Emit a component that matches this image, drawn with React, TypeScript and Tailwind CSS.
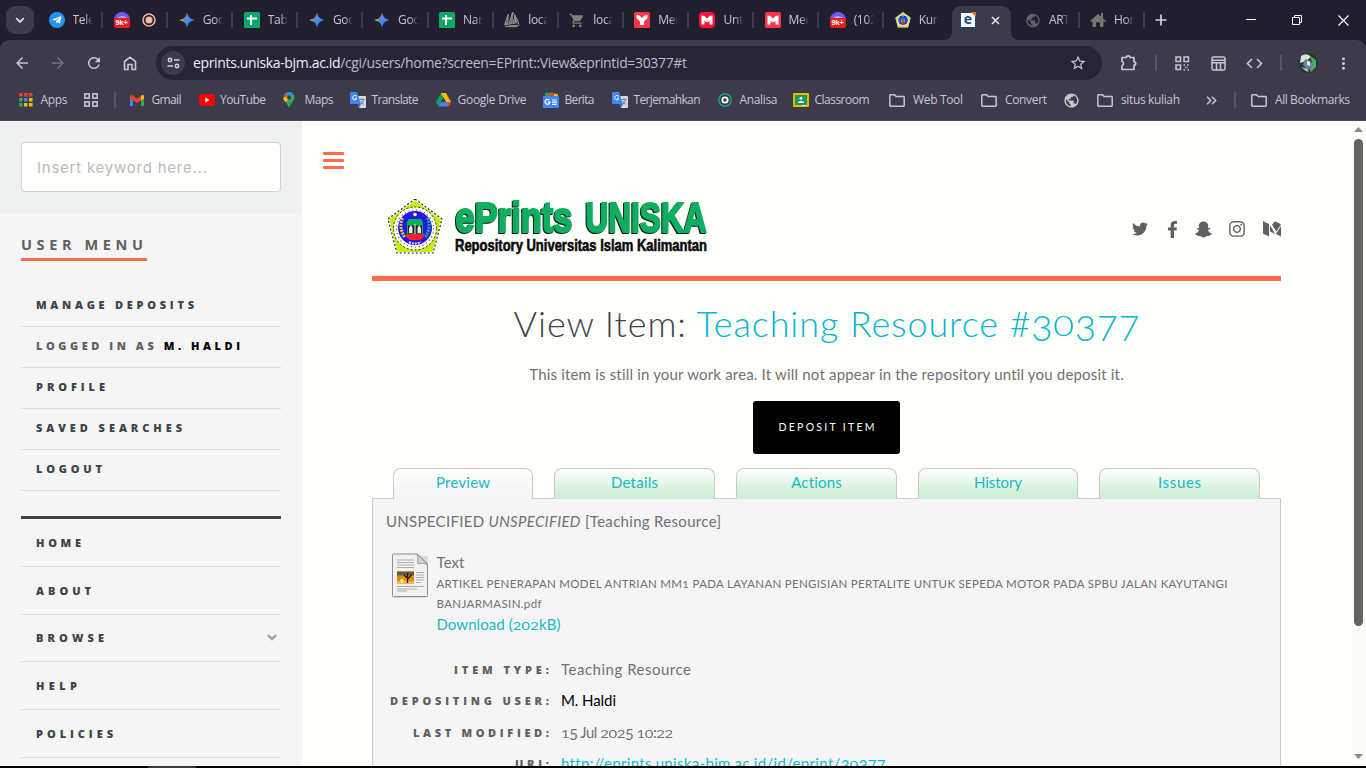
import React, { useLayoutEffect, useRef } from "react";
import {
  FaTwitter, FaFacebookF, FaSnapchatGhost, FaInstagram, FaTelegramPlane,
} from "react-icons/fa";
import { MdShoppingCart, MdPublic, MdOutlineStarBorder, MdMoreVert, MdArrowBack, MdArrowForward, MdRefresh } from "react-icons/md";

/* Text set to a given advance width by adjusting its tracking. */
function Fit({ w, className = "", children }: { w: number; className?: string; children: React.ReactNode }) {
  const ref = useRef<HTMLSpanElement>(null);
  useLayoutEffect(() => {
    const el = ref.current;
    if (!el) return;
    el.style.letterSpacing = "0px";
    const n = Math.max(1, (el.textContent || "").length - 1);
    const ls = (w - el.getBoundingClientRect().width) / n;
    el.style.letterSpacing = ls + "px";
    el.style.marginRight = -ls + "px";
  }, [w]);
  return <span ref={ref} className={"inline-block whitespace-pre " + className}>{children}</span>;
}

/* Old-style numerals: 0-2 at x-height, 3/4/5/7/9 hanging below the baseline. */
function Old({ children }: { children: string }) {
  return (
    <>
      {children.split("").map((c, i) =>
        "012".includes(c) ? (
          <span key={i} className="inline-block origin-[50%_78%] scale-y-[0.78] leading-none">{c}</span>
        ) : "34579".includes(c) ? (
          <span key={i} className="inline-block translate-y-[0.12em] leading-none">{c}</span>
        ) : (
          c
        )
      )}
    </>
  );
}

const Gemini = () => (
  <svg width="16" height="16" viewBox="0 0 16 16">
    <defs>
      <linearGradient id="gm" x1="0.2" y1="0" x2="0.8" y2="1">
        <stop offset="0.15" stopColor="#f04a3e" /><stop offset="0.45" stopColor="#4f8cf6" /><stop offset="0.7" stopColor="#3186ff" /><stop offset="1" stopColor="#2f80f5" />
      </linearGradient>
      <linearGradient id="gm2" x1="0" y1="0.4" x2="0.5" y2="0.8">
        <stop offset="0" stopColor="#fbc02d" /><stop offset="0.5" stopColor="#2ea65a" /><stop offset="1" stopColor="#2ea65a" stopOpacity="0" />
      </linearGradient>
    </defs>
    <path d="M8 .3C8.7 4.6 11 7.2 15.7 8 11 8.8 8.7 11.4 8 15.7 7.3 11.4 5 8.8.3 8 5 7.2 7.3 4.6 8 .3z" fill="url(#gm)" />
    <path d="M.3 8C4 7.7 6 8 8 8v7.7C7.300 11.4 5 8.800.3 8z" fill="url(#gm2)" />
  </svg>
);
const Sheet = () => (
  <svg width="16" height="16" viewBox="0 0 16 16"><rect width="16" height="16" rx="1.500" fill="#0aa866" /><path d="M3 6.500h10M7 3v10" stroke="#fff" strokeWidth="2" /></svg>
);
const Badge = () => (
  <div className="relative h-4 w-4">
    <svg width="16" height="16" viewBox="0 0 16 16"><circle cx="8" cy="8" r="8" fill="#6a5cf0" /><path d="M3 6q5-4 10 0v3H3z" fill="#a9a2ff" /></svg>
    <span className="absolute top-[6px] left-0 flex h-[10px] w-4 items-center justify-center rounded-[2px] bg-[#ee1c1c] font-['Liberation_Sans'] text-[7.500px] font-bold leading-none tracking-[-0.2px] text-white">9k+</span>
  </div>
);
const Rec = () => (
  <svg width="14" height="14" viewBox="0 0 14 14"><circle cx="7" cy="7" r="6" fill="none" stroke="#f5b8a2" strokeWidth="1.500" /><circle cx="7" cy="7" r="3.500" fill="#f5b8a2" /></svg>
);
const Ships = () => (
  <svg width="17" height="16" viewBox="0 0 17 16" fill="none" stroke="#a09d98" strokeWidth="1">
    <path d="M4.500 2L1 12h3zM9 0L5.500 12h3zM12 3l-2.500 9 3-1z" fill="#66635f" /><path d="M0 13h5l2 1h9M1 15h13M10 0l4 12M13 5l3 8" />
  </svg>
);
const Mend = ({ kind, round }: { kind: "y" | "m"; round?: boolean }) => (
  <svg width="16" height="16" viewBox="0 0 16 16"><rect width="16" height="16" rx={round ? 4 : 1.5} fill={round ? "#fa1238" : "#fa3745"} />
    {kind === "y" ? <path d="M2.500 3l3 .5L8 6l2.500-2.500 3-.5v3L10 9.500V13H6V9.500L2.500 6z" fill="#fff" /> : <path d="M2.500 3.500l3 .5L8 6.500 10.500 4l3-.5v9h-3V9L8 10.500 5.500 9v3.500h-3zM4.500 7v2M11.500 7v2" fill="#fff" />}
  </svg>
);
const Crest = ({ s }: { s: number }) => (
  <svg width={s} height={s} viewBox="0 0 56 56">
    <path d="M28 0L55 20 46 54H10L1 20z" fill="#fff" stroke="#222" strokeWidth="1.200" strokeDasharray="2 2" strokeLinejoin="round" />
    <path d="M28 4L51.500 21 44 51H12L4.500 21z" fill="#c8ee08" stroke="#c8ee08" strokeWidth="4" strokeLinejoin="round" />
    <circle cx="28" cy="29.500" r="21.500" fill="#fffffa" stroke="#222" strokeWidth="1" strokeDasharray="2 2" />
    <circle cx="28" cy="29.500" r="18.500" fill="none" stroke="#555" strokeWidth="1.200" strokeDasharray="1 3" />
    <circle cx="28" cy="29" r="17" fill="#2418e8" />
    <path d="M15.500 19q-4 9 2 19" fill="none" stroke="#d9d23a" strokeWidth="3" strokeDasharray="2 1" />
    <path d="M40.500 19q4 9-2 19" fill="none" stroke="#2aa890" strokeWidth="3" strokeDasharray="2 1" />
    <circle cx="28" cy="15.500" r="1.800" fill="#fff" /><path d="M22 20h12l2 3v12H20V23z" fill="#0cae5b" />
    <path d="M20 35h16l2 2-5 4h-10l-5-4z" fill="#ef2525" />
    <path d="M21 34.500v-8h14v8z" fill="#222" /><path d="M22 34v-5l2-3 1.500 3v5zM30.500 34v-5l1.500-3 2 3v5z" fill="#e9e9e9" /><path d="M27.500 25h1v10h-1z" fill="#e9e9e9" />
    <path d="M22 43q6 3 12 0" stroke="#e5e5ff" strokeWidth="2" fill="none" strokeDasharray="2 1" />
  </svg>
);
const EP = () => (
  <div className="relative flex h-4 w-4 items-center justify-center border border-[#0f4d80] bg-white font-['Open_Sans'] text-[14px] font-bold leading-none text-[#0f4d80]">
    <span className="-mt-[3px]">e</span>
    <svg className="absolute -top-px -right-px" width="5" height="5"><path d="M0 0h5v5z" fill="#f26b1d" /></svg>
  </div>
);
const House = () => (
  <svg width="16" height="16" viewBox="0 0 16 16" fill="#77756c"><path d="M8 2L0 9l1 1 1.500-1v6H6v-4q2-2 4 0v4h3.500V9l1.500 1 1-1-3-2.600V1h-2v3.600z" /></svg>
);

const tabs: { icon: React.ReactNode; t?: string; active?: boolean; nosep?: boolean }[] = [
  { icon: <span className="flex h-4 w-4 items-center justify-center rounded-full bg-[#2095f2]"><FaTelegramPlane size={10} color="#fff" /></span>, t: "Tele" },
  { icon: <Badge /> },
  { icon: <Gemini />, t: "Goo" },
  { icon: <Sheet />, t: "Tab" },
  { icon: <Gemini />, t: "Goo" },
  { icon: <Gemini />, t: "Goo" },
  { icon: <Sheet />, t: "Nar" },
  { icon: <Ships />, t: "loca" },
  { icon: <MdShoppingCart size={17} color="#807e7c" />, t: "loca" },
  { icon: <Mend kind="y" />, t: "Mer" },
  { icon: <Mend kind="m" round />, t: "Unt" },
  { icon: <Mend kind="m" />, t: "Mer" },
  { icon: <Badge />, t: "(102" },
  { icon: <Crest s={16} />, t: "Kur", nosep: true },
  { icon: <EP />, active: true },
  { icon: <MdPublic size={17} color="#5d6468" />, t: "ART" },
  { icon: <House />, t: "Hor" },
];

const Folder = () => (
  <svg width="16" height="13" viewBox="0 0 16 13" fill="none" stroke="#c9c6d3" strokeWidth="1.500"><path d="M.8 2.300V1.500q0-.7.7-.7h4l1.700 1.700h7.300q.7 0 .7.700v8.300q0 .7-.7.700h-13q-.7 0-.7-.7z" /></svg>
);
const AppsIcon = () => (
  <svg width="14" height="14" viewBox="0 0 14 14">
    {["#ea4335", "#ea4335", "#ea4335", "#34a853", "#4285f4", "#fbbc04", "#34a853", "#fbbc04", "#fbbc04"].map((c, i) => (
      <rect key={i} x={(i % 3) * 5} y={Math.floor(i / 3) * 5} width="3.500" height="3.500" fill={c} />
    ))}
  </svg>
);
const Grid4 = () => (
  <svg width="14" height="14" viewBox="0 0 14 14" fill="none" stroke="#c0bdca" strokeWidth="1.700"><path d="M.8.8h4.400v4.400H.8zM8.800.8h4.400v4.400H8.800zM.8 8.800h4.400v4.400H.8zM8.800 8.800h4.400v4.400H8.800z" /></svg>
);
const Gmail = () => (
  <svg width="14" height="11" viewBox="0 0 14 11"><path d="M0 1.500v9.500h3V5z" fill="#4285f4" /><path d="M14 1.500v9.500h-3V5z" fill="#34a853" /><path d="M0 1.500Q.5-.8 3 .7l4 3 4-3q2.500-1.500 3 .8v2L7 8 0 3.500z" fill="#ea4335" /><path d="M11 .7q2.500-1.500 3 .8v2l-3 2z" fill="#fbbc04" /></svg>
);
const YT = () => <svg width="16" height="12" viewBox="0 0 16 12"><rect width="16" height="12" rx="3" fill="#f00" /><path d="M6.300 3.500v5l4.200-2.500z" fill="#fff" /></svg>;
const Maps = () => (
  <svg width="12" height="16" viewBox="0 0 12 16"><path d="M6 0a5.600 5.600 0 015.600 5.600C11.600 9 8 10.500 6 16 4 10.500.4 9 .4 5.600A5.600 5.600 0 016 0z" fill="#34a853" /><path d="M6 5.600L10 1.700Q8.500 0 6 0 3.500 0 1.700 2z" fill="#4285f4" /><path d="M1.700 2Q.2 3.500.4 6.500L4 5.600 5 4z" fill="#ea4335" /><path d="M.4 6Q.8 8.600 2.500 10.300L8 4.500 5 4z" fill="#fbbc04" /><circle cx="6" cy="5.500" r="2" fill="#3c3a4b" /></svg>
);
const Trans = () => (
  <svg width="16" height="16" viewBox="0 0 16 16"><path d="M6 4h9q1 0 1 1v10q0 1-1 1H9z" fill="#d5d9df" /><path d="M1 0h6l4 12H1q-1 0-1-1V1q0-1 1-1z" fill="#4285f4" /><path d="M7.500 12H11l-2 4z" fill="#3367d6" /><path d="M6.500 4.200A2.200 2.200 0 106.600 7V6.200H5" stroke="#fff" strokeWidth="1" fill="none" /><path d="M9.500 7.500h5M12 6v1.500M13.500 8q-.5 3-3 4.500M11 9q1 2.500 3 3.500" stroke="#6f7a86" strokeWidth=".9" fill="none" /></svg>
);
const Drive = () => <svg width="15" height="14" viewBox="0 0 15 14"><path d="M5 0h5L5 8.800 2.500 13.300 0 9z" fill="#12a05c" /><path d="M5 0h5l5 9h-5z" fill="#fbbc04" /><path d="M5 9h10l-2.500 4.500h-10z" fill="#4285f4" /><path d="M10 9h5l-2.500 4.500z" fill="#ea4335" /><path d="M5.200 8.900L7.500 5 9.800 8.900z" fill="#3c3a4b" /></svg>;
const News = () => <svg width="16" height="16" viewBox="0 0 16 16"><path d="M2 1l8-1v6H2z" fill="#14a25d" /><path d="M6 1l8 .5V6H6z" fill="#ea4335" /><path d="M11 1.500l4 1V6h-4z" fill="#fbbc04" /><rect y="4" width="16" height="12" rx="1" fill="#4285f4" /><path d="M6.500 8.200A2.500 2.500 0 106.800 11v-.8H4.800M9 8h4.500M9 10.200h5M9 12.400h4.500" stroke="#fff" strokeWidth="1.200" fill="none" /></svg>;
const Analisa = () => <svg width="14" height="14" viewBox="0 0 14 14"><circle cx="7" cy="7" r="6.200" fill="none" stroke="#12a678" strokeWidth="1.500" /><circle cx="7" cy="7" r="2.700" fill="none" stroke="#fff" strokeWidth="1.800" /></svg>;
const Classroom = () => <svg width="16" height="14" viewBox="0 0 16 14"><rect width="16" height="14" rx="1" fill="#f4b400" /><rect x="2" y="2" width="12" height="10" fill="#149a5b" /><circle cx="8" cy="5.300" r="1.500" fill="#fff" /><path d="M4.500 10q.5-2 3.500-2t3.500 2z" fill="#fff" /><path d="M9 12h4v1H9z" fill="#eee" /></svg>;

const bookmarks: { c: string; i: React.ReactNode; t?: string; w?: number; g?: string }[] = [
  { c: "w-[65px]", i: <AppsIcon />, t: "Apps", w: 27 },
  { c: "w-[30px]", i: <Grid4 /> },
  { c: "w-[16px]", i: <span className="h-4 w-0.5 bg-[#56536a]" /> },
  { c: "w-[68.500px]", i: <Gmail />, t: "Gmail", w: 30 },
  { c: "w-[84.500px]", i: <YT />, t: "YouTube", w: 46 },
  { c: "w-[67px]", i: <Maps />, t: "Maps", w: 29 },
  { c: "w-[86px]", i: <Trans />, t: "Translate", w: 47 },
  { c: "w-[107px]", i: <Drive />, t: "Google Drive", w: 69 },
  { c: "w-[69px]", i: <News />, t: "Berita", w: 30 },
  { c: "w-[106px]", i: <Trans />, t: "Terjemahkan", w: 67 },
  { c: "w-[75px]", i: <Analisa />, t: "Analisa", w: 38 },
  { c: "w-[96px]", i: <Classroom />, t: "Classroom", w: 55 },
  { c: "w-[92px]", i: <Folder />, t: "Web Tool", w: 50, g: "f" },
  { c: "w-[82px]", i: <Folder />, t: "Convert", w: 42, g: "f" },
  { c: "w-[34px]", i: <MdPublic size={17} color="#c6c9cc" /> },
  { c: "w-[109px]", i: <Folder />, t: "situs kuliah", w: 59, g: "f" },
  { c: "w-[28px]", i: <svg width="11" height="9" fill="none" stroke="#c9c6d3" strokeWidth="1.500"><path d="M1 .8l3.700 3.700L1 8.200M6 .8l3.700 3.700L6 8.200" /></svg> },
  { c: "w-[17px]", i: <span className="h-4 w-0.5 bg-[#56536a]" /> },
  { c: "w-[104px]", i: <Folder />, t: "All Bookmarks", w: 75, g: "f" },
];

function Chrome() {
  return (
    <header className="flex h-[121px] flex-none flex-col border-b border-[#4b4859] bg-[#211e2f] font-['Open_Sans',sans-serif] text-[12px] text-[#c9c6d3]">
      <div className="flex h-10 flex-none items-center">
        <div className="ml-1.5 flex h-7 w-7 flex-none items-center justify-center rounded-[9px] bg-[#3c3a4b]">
          <svg width="10" height="7" fill="none" stroke="#dedbe8" strokeWidth="1.800"><path d="M1.200 1.200L5 5l3.800-3.800" /></svg>
        </div>
        <div className="ml-1 flex h-10 items-center">
          {tabs.map((t, i) =>
            t.active ? (
              <div key={i} className="relative flex h-[34px] w-[65.1px] flex-none items-center self-end">
                <svg className="absolute top-0 -left-[6px]" width="76" height="34"><path d="M0 34q9 0 9-9V10Q9 0 19 0h39q10 0 10 10v15q0 9 8 9z" fill="#3c3a4b" /></svg>
                <span className="relative -mt-1.5 ml-[10.500px]"><EP /></span>
                <svg className="relative -mt-1.5 ml-[15px]" width="9" height="9" stroke="#e2dfea" strokeWidth="1.600"><path d="M1 1l7 7M8 1L1 8" /></svg>
              </div>
            ) : (
              <div key={i} className="flex h-10 w-[65.1px] flex-none items-center pl-[10.500px]">
                <span className="flex w-4 flex-none justify-center">{t.icon}</span>
                {t.t ? (
                  <span className="ml-2 w-[20px] flex-none overflow-hidden whitespace-nowrap tracking-[-0.3px] [mask-image:linear-gradient(to_right,#000_60%,transparent)]">{t.t}</span>
                ) : (
                  <span className="ml-3 w-[15px] flex-none"><Rec /></span>
                )}
                {!t.nosep && <span className="mr-0 ml-auto h-4 w-0.5 flex-none bg-[#3f3c4e]" />}
              </div>
            )
          )}
        </div>
        <svg className="ml-[10px]" width="12" height="12" stroke="#d5d2df" strokeWidth="1.700"><path d="M6 .5v11M.5 6h11" /></svg>
        <div className="mr-[17px] ml-auto flex items-center text-white">
          <svg className="mr-[36px]" width="10" height="10" stroke="#fff"><path d="M0 4.500h10" /></svg>
          <svg className="mr-[36px]" width="10" height="10" stroke="#fff" fill="none"><path d="M.5 2.500h7v7h-7zM2.500 2.500v-2h7v7h-2" /></svg>
          <svg width="11" height="11" stroke="#fff" strokeWidth="1.200"><path d="M.5.5l10 10M10.500.5l-10 10" /></svg>
        </div>
      </div>
      <div className="flex h-20 flex-none flex-col rounded-t-[9px] bg-[#3c3a4b]">
        <div className="flex h-[46px] items-center pl-[13px] text-[#c9c6d3]">
          <MdArrowBack size={18} /><MdArrowForward size={18} className="ml-[18px] text-[#726f80]" />
          <MdRefresh size={18} className="ml-[18px]" />
          <svg className="ml-[20px]" width="14" height="15" viewBox="0 0 14 15" fill="none" stroke="currentColor" strokeWidth="1.600"><path d="M1.500 13.500V5.500L7 1.200l5.500 4.300v8H9v-5H5v5z" /></svg>
          <div className="ml-[19px] flex h-[34px] w-[946px] items-center rounded-full bg-[#262435] pl-[5px]">
            <span className="flex h-6 w-6 items-center justify-center rounded-full bg-[#3c3a4b]">
              <svg width="13" height="12" viewBox="0 0 13 12" fill="none" stroke="#d5d2df" strokeWidth="1.500"><circle cx="3" cy="3" r="1.700" /><path d="M7 3h5.500M.5 9H6" /><circle cx="10" cy="9" r="1.700" /></svg>
            </span>
            <Fit w={494} className="ml-2 text-[14px] leading-none text-[#bebbc8]"><span className="text-[#f0eef6]">eprints.uniska-bjm.ac.id</span>/cgi/users/home?screen=EPrint::View&amp;eprintid=30377#t</Fit>
            <MdOutlineStarBorder size={18} className="mr-[15px] ml-auto" />
          </div>
          <svg className="ml-[18px]" width="18" height="18" viewBox="0 0 18 18" fill="none" stroke="currentColor" strokeWidth="1.700"><path d="M2 3.500h4.500a1.700 1.700 0 013.400 0H14v4.300a1.700 1.700 0 010 3.400v4.300H2v-3.800a2.200 2.200 0 000-4.200z" strokeLinejoin="round" /></svg>
          <span className="ml-[17px] h-4 w-0.5 bg-[#56536a]" />
          <svg className="ml-[18px]" width="15" height="15" fill="none" stroke="currentColor" strokeWidth="1.500"><path d="M1 1h4.500v4.500H1zM9 1h4.500v4.500H9zM1 9h4.500v4.500H1z" /><path d="M8.500 9h2M12 9h2.500M10 11.500h3M8.500 14h2M12.500 14h2" strokeDasharray="1.500 1" /></svg>
          <svg className="ml-[21px]" width="15" height="15" fill="none" stroke="currentColor" strokeWidth="1.500"><rect x="1" y="1" width="13" height="13" rx="1.500" /><path d="M1 4.200h13M1 6.700h13M5.500 6.500V14M9.500 6.500V14" /></svg>
          <svg className="ml-[20px]" width="17" height="11" fill="none" stroke="currentColor" strokeWidth="1.600"><path d="M6 1L1.500 5.500 6 10M11 1l4.500 4.500L11 10" /></svg>
          <span className="ml-[17px] h-4 w-0.5 bg-[#56536a]" />
          <svg className="ml-[16px]" width="20" height="20" viewBox="0 0 20 20"><circle cx="10" cy="10" r="10" fill="#27382f" /><path d="M3 3q6-4 10 1l-5 4-6 2z" fill="#dde4da" /><path d="M12 3l6 4v7l-5 5-3-5 4-5z" fill="#58a466" /><path d="M7 6l6 2 1 7-5 2-4-5z" fill="#67809e" /><path d="M9 8l3 1v4l-3-1z" fill="#e4e8ef" /><path d="M3 14l5 4 3 1-2-3z" fill="#bdcdb8" /></svg>
          <MdMoreVert size={19} className="ml-[16px]" />
        </div>
        <div className="flex h-[28px] items-center pl-[19px]">
          {bookmarks.map((b, i) => (
            <div key={i} className={"flex flex-none items-center " + b.c}>
              <span className={b.g ? "flex w-6 flex-none" : b.t ? "flex w-[21.500px] flex-none" : "flex"}>{b.i}</span>
              {b.t && <Fit w={b.w || 0} className="leading-none">{b.t}</Fit>}
            </div>
          ))}
        </div>
      </div>
    </header>
  );
}

const cap = "font-['Open_Sans'] font-extrabold text-[11px] leading-none";

function Sidebar() {
  const user: [React.ReactNode, number][] = [
    ["MANAGE DEPOSITS", 158],
    [<><span className="text-[#5f6060]">LOGGED IN AS </span><span className="text-black">M. HALDI</span></>, 204],
    ["PROFILE", 69],
    ["SAVED SEARCHES", 146],
    ["LOGOUT", 66],
  ];
  const nav: [string, number, string][] = [
    ["HOME", 45, "h-[48px]"], ["ABOUT", 55, "h-[48px]"], ["BROWSE", 68, "h-[47px]"], ["HELP", 41, "h-[48px]"], ["POLICIES", 77, "h-[48px]"],
  ];
  return (
    <aside className="flex w-[302px] flex-none flex-col overflow-hidden bg-[#f5f5f6] text-[#3d4449]">
      <div className="h-[92px] flex-none bg-[#eff1f1] px-[21px] pt-[21px]">
        <div className="flex h-[50px] items-center rounded border border-[#cfd1d0] bg-[#fffffc] pl-[15px]">
          <Fit w={170} className="font-['Inter'] text-[15px] leading-none text-[#b9bbba]">Insert keyword here...</Fit>
        </div>
      </div>
      <div className="flex flex-col items-start px-[21px] pt-[25px]">
        <div className="flex h-[23px] w-[126px] border-b-[3px] border-[#ff6a4d]">
          <Fit w={122} className="font-['Open_Sans'] text-[14.500px] font-bold leading-none text-[#5f6060]">USER MENU</Fit>
        </div>
        <ul className="mt-[25px] w-[260px]">
          {user.map(([t, w], i) => (
            <li key={i} className="flex h-[41px] items-center border-b border-[#d8dede] pb-[3px] pl-[15px]">
              <Fit w={w} className={cap}>{t}</Fit>
            </li>
          ))}
        </ul>
        <ul className="mt-[25px] w-[260px] border-t-[3px] border-[#3d4449]">
          {nav.map(([t, w, h], i) => (
            <li key={i} className={"flex items-center justify-between border-b border-[#d8dede] pr-1 pb-px pl-[15px] " + h}>
              <Fit w={w} className={cap}>{t}</Fit>
              {t === "BROWSE" && <svg width="10" height="7" fill="none" stroke="#9b9e9f" strokeWidth="2.400"><path d="M.9 1L5 5l4.100-4" /></svg>}
            </li>
          ))}
        </ul>
      </div>
    </aside>
  );
}

const Logo = () => (
  <svg width="324" height="60" viewBox="0 0 324 60">
    <g transform="translate(0 2)"><Crest s={56} /></g>
    <g fontFamily="Liberation Sans Narrow, Liberation Sans, sans-serif" fontWeight="700">
      <g className="drop-shadow-[-1px_1px_0_#0a1a10]" fill="#0fae60" stroke="#0fae60" strokeWidth="2.200">
        <text x="68.500" y="35" fontSize="43" textLength="117" lengthAdjust="spacingAndGlyphs">ePrints</text>
        <text x="198.500" y="35" fontSize="43" textLength="121" lengthAdjust="spacingAndGlyphs">UNISKA</text>
      </g>
      <text x="68" y="53.500" fontSize="16" textLength="252" lengthAdjust="spacingAndGlyphs" fill="#0a0a0a" stroke="#0a0a0a" strokeWidth=".6">Repository Universitas Islam Kalimantan</text>
    </g>
  </svg>
);

const DocIcon = () => (
  <svg width="38" height="46" viewBox="0 0 38 46">
    <rect x="1" y="3" width="36" height="42" rx="2" fill="#c9c9c9" opacity=".6" />
    <path d="M2.500 1h24L36.500 11v31.500q0 1-1 1h-33q-1 0-1-1V2q0-1 1-1z" fill="#f1f2f0" stroke="#8c8e8c" />
    <path d="M26 1q1.500 4 .5 9.500 5-1 10 1z" fill="#d2d3d1" stroke="#8c8e8c" strokeWidth=".8" />
    <path d="M6 7h17M6 9.500h17M6 12h17M6 14.500h17M25 19.500h8M25 22h8M25 24.500h8M25 27h8M25 29.500h5M6 33.500h27M6 36h20M6 38h10" stroke="#adafad" />
    <rect x="6" y="18.500" width="17" height="12" fill="#d98f1d" /><rect x="6" y="18.500" width="17" height="4" fill="#6b5a3c" />
    <path d="M6 28h17v2.500H6z" fill="#eeb73b" /><circle cx="11" cy="28" r="2" fill="#ffe680" />
    <path d="M16.500 30v-5l-3.500-3M16.500 26l4-4M16.500 24v-4" stroke="#1e1606" strokeWidth="1.200" fill="none" />
  </svg>
);

function Main() {
  const tabList: [string, number, string][] = [
    ["Preview", 54, "w-[140px] to-[#f5f5f6]"],
    ["Details", 47, "ml-[21px] w-[161px] to-[#d0efd8]"],
    ["Actions", 51, "ml-[21px] w-[161px] to-[#d0efd8]"],
    ["History", 48, "ml-[21px] w-[160px] to-[#d0efd8]"],
    ["Issues", 43, "ml-[21px] w-[161px] to-[#d0efd8]"],
  ];
  const rows: [string, number, React.ReactNode, number, string][] = [
    ["ITEM TYPE:", 95, "Teaching Resource", 130, ""],
    ["DEPOSITING USER:", 159, "M. Haldi", 55, "text-black"],
    ["LAST MODIFIED:", 136, <><Old>15</Old> Jul <Old>2025</Old> <Old>10</Old>:<Old>22</Old></>, 112, ""],
    ["URI:", 34, <>http://eprints.uniska-bjm.ac.id/id/eprint/<Old>30377</Old></>, 324, "text-[#17b9c6]"],
  ];
  return (
    <main className="flex min-w-0 flex-1 overflow-hidden bg-[#fffffc]">
      <div className="flex w-[70px] flex-none flex-col gap-1 pt-[31px] pl-[21px]">
        <span className="h-[3px] w-[21px] rounded-[1px] bg-[#ff6a4d]" />
        <span className="h-[3px] w-[21px] rounded-[1px] bg-[#ff6a4d]" />
        <span className="h-[3px] w-[21px] rounded-[1px] bg-[#ff6a4d]" />
      </div>
      <div className="flex w-[909px] flex-none flex-col">
        <div className="flex h-[160px] flex-none items-start justify-between border-b-[5px] border-[#ff6a4d] pl-[15px]">
          <div className="pt-[76px]"><Logo /></div>
          <div className="flex items-center pt-[99px] text-[#5f6060]">
            <FaTwitter size={16} />
            <FaFacebookF size={17} className="ml-[16px]" />
            <FaSnapchatGhost size={17} className="ml-[14px]" />
            <FaInstagram size={18} className="ml-[16px]" />
            <svg className="ml-[17px]" width="18" height="16" viewBox="0 0 18 16" fill="currentColor"><path d="M0 0l6 3v12.500L0 12.500zM7 4l5 9-5-2.500zM12 .2l6 3-4.500 7.300L9 3.800zM18 5v10.500l-5-2.500z" /></svg>
          </div>
        </div>
        <h1 className="mt-[24px] flex h-[38px] items-center justify-center text-[36px] font-light leading-none text-[#3d4449]">
          <Fit w={626} className="font-['Lato']">View Item: <span className="text-[#06b6c9]">Teaching Resource #<Old>30377</Old></span></Fit>
        </h1>
        <p className="mt-[26px] flex h-[20px] items-center justify-center">
          <Fit w={595} className="leading-none">This item is still in your work area. It will not appear in the repository until you deposit it.</Fit>
        </p>
        <div className="mt-[19px] flex h-[53px] w-[147px] flex-none items-center justify-center self-center rounded-[3px] bg-black">
          <Fit w={96} className="text-[10.500px] leading-none text-white">DEPOSIT ITEM</Fit>
        </div>
        <div className="relative z-10 mt-[14px] flex h-[31px] flex-none pl-[21px]">
          {tabList.map(([t, w, c]) => (
            <div key={t} className={"flex flex-none items-center justify-center rounded-t-[8px] border border-b-0 border-[#c9caca] bg-linear-to-b from-[#fffffc] to-80% pb-[3px] text-[#17b9c6] " + c}>
              <Fit w={w} className="leading-none">{t}</Fit>
            </div>
          ))}
        </div>
        <section className="-mt-px flex h-[320px] flex-none flex-col border border-[#c9caca] bg-[#f5f5f6] pt-[15px] pl-[13px]">
          <div className="h-[16px] leading-none"><Fit w={335}>UNSPECIFIED <i>UNSPECIFIED</i> [Teaching Resource]</Fit></div>
          <div className="mt-[23px] flex">
            <div className="w-[50.500px] flex-none pl-[5px]"><DocIcon /></div>
            <div className="flex flex-col items-start leading-none">
              <Fit w={28} className="mt-[2px] h-[21px]">Text</Fit>
              <Fit w={791} className="mt-[2px] h-5 text-[11.500px]">ARTIKEL PENERAPAN MODEL ANTRIAN MM<Old>1</Old> PADA LAYANAN PENGISIAN PERTALITE UNTUK SEPEDA MOTOR PADA SPBU JALAN KAYUTANGI</Fit>
              <Fit w={105} className="h-[19px] text-[11.500px]">BANJARMASIN.pdf</Fit>
              <Fit w={124} className="text-[#17b9c6]">Download (<Old>202</Old>kB)</Fit>
            </div>
          </div>
          <dl className="mt-[22px]">
            {rows.map(([k, kw, v, vw, c]) => (
              <div key={k} className="flex h-[31.300px] items-center">
                <dt className="flex w-[163px] justify-end leading-none"><Fit w={kw} className={cap + " text-[#5f6060]"}>{k}</Fit></dt>
                <dd className={"ml-[12px] leading-none " + c}><Fit w={vw}>{v}</Fit></dd>
              </div>
            ))}
          </dl>
        </section>
      </div>
      <div className="mr-0 ml-auto flex w-[15px] flex-none flex-col items-center bg-[#fcfcf9] pt-[6px]">
        <svg width="9" height="5"><path d="M4.500 0L9 5H0z" fill="#8b8b8b" /></svg>
        <span className="mt-[7px] h-[487px] w-[9px] rounded-full bg-[#636362]" />
        <svg className="mt-[128px]" width="9" height="5"><path d="M0 0h9L4.500 5z" fill="#8b8b8b" /></svg>
      </div>
    </main>
  );
}

export default function App() {
  return (
    <div className="flex h-[768px] w-[1366px] flex-col overflow-hidden bg-black">
      <Chrome />
      <div className="flex h-[645px] flex-none overflow-hidden font-['Lato',sans-serif] text-[15px] text-[#707171]">
        <Sidebar />
        <Main />
      </div>
      <div className="h-0.5 flex-none pl-[148px]"><div className="h-0.5 w-12 bg-[#3a3a3a]" /></div>
    </div>
  );
}
